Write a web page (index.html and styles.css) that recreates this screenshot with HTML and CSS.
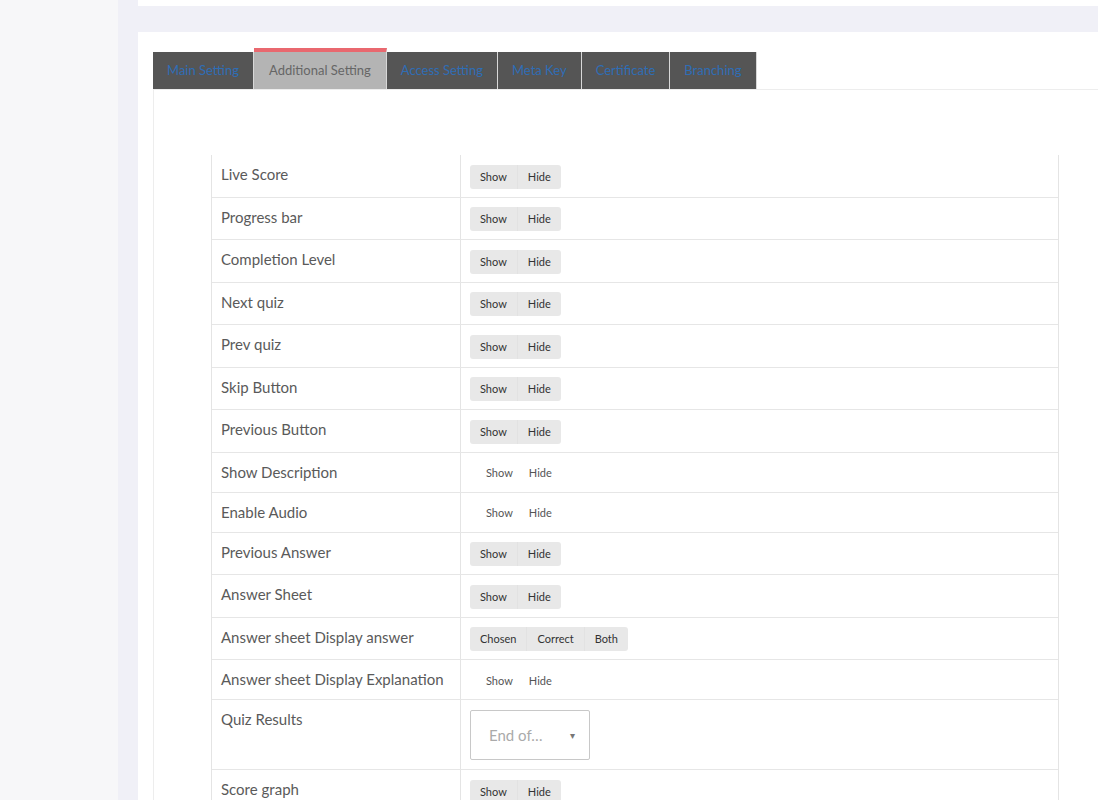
FILE: index.html
```html
<!DOCTYPE html>
<html lang="en">
<head>
    <meta charset="UTF-8">
    <meta name="viewport" content="width=device-width, initial-scale=1.0">
    <title>Quiz Settings</title>
    <link rel="stylesheet" href="styles.css">
</head>
<body>
    <aside class="sidebar"></aside>

    <div class="content">
        <div class="top-card"></div>

        <div class="card">
            <nav class="tabs">
                <a class="tab">Main Setting</a>
                <a class="tab active">Additional Setting</a>
                <a class="tab">Access Setting</a>
                <a class="tab">Meta Key</a>
                <a class="tab">Certificate</a>
                <a class="tab">Branching</a>
            </nav>

            <div class="tab-panel">
                <div class="settings">
                    <div class="row">
                        <div class="label">Live Score</div>
                        <div class="value"><div class="toggle"><span>Show</span><span>Hide</span></div></div>
                    </div>
                    <div class="row">
                        <div class="label">Progress bar</div>
                        <div class="value"><div class="toggle"><span>Show</span><span>Hide</span></div></div>
                    </div>
                    <div class="row">
                        <div class="label">Completion Level</div>
                        <div class="value"><div class="toggle"><span>Show</span><span>Hide</span></div></div>
                    </div>
                    <div class="row">
                        <div class="label">Next quiz</div>
                        <div class="value"><div class="toggle"><span>Show</span><span>Hide</span></div></div>
                    </div>
                    <div class="row">
                        <div class="label">Prev quiz</div>
                        <div class="value"><div class="toggle"><span>Show</span><span>Hide</span></div></div>
                    </div>
                    <div class="row">
                        <div class="label">Skip Button</div>
                        <div class="value"><div class="toggle"><span>Show</span><span>Hide</span></div></div>
                    </div>
                    <div class="row">
                        <div class="label">Previous Button</div>
                        <div class="value"><div class="toggle"><span>Show</span><span>Hide</span></div></div>
                    </div>
                    <div class="row short">
                        <div class="label">Show Description</div>
                        <div class="value"><div class="toggle plain"><span>Show</span><span>Hide</span></div></div>
                    </div>
                    <div class="row short">
                        <div class="label">Enable Audio</div>
                        <div class="value"><div class="toggle plain"><span>Show</span><span>Hide</span></div></div>
                    </div>
                    <div class="row">
                        <div class="label">Previous Answer</div>
                        <div class="value"><div class="toggle"><span>Show</span><span>Hide</span></div></div>
                    </div>
                    <div class="row">
                        <div class="label">Answer Sheet</div>
                        <div class="value"><div class="toggle"><span>Show</span><span>Hide</span></div></div>
                    </div>
                    <div class="row">
                        <div class="label">Answer sheet Display answer</div>
                        <div class="value"><div class="toggle"><span>Chosen</span><span>Correct</span><span>Both</span></div></div>
                    </div>
                    <div class="row short">
                        <div class="label">Answer sheet Display Explanation</div>
                        <div class="value"><div class="toggle plain"><span>Show</span><span>Hide</span></div></div>
                    </div>
                    <div class="row tall">
                        <div class="label">Quiz Results</div>
                        <div class="value">
                            <div class="select"><span>End of…</span><span class="caret">▾</span></div>
                        </div>
                    </div>
                    <div class="row">
                        <div class="label">Score graph</div>
                        <div class="value"><div class="toggle"><span>Show</span><span>Hide</span></div></div>
                    </div>
                </div>
            </div>
        </div>
    </div>
</body>
</html>
```

FILE: styles.css
```css
body {
    margin: 0;
    font-family: Lato, "Open Sans", sans-serif;
    background-color: #f0f0f7;
    display: flex;
    min-height: 100vh;
    overflow: hidden;
}
.sidebar {
    width: 118px;
    flex-shrink: 0;
    background-color: #f7f7f9;
}
.content {
    flex-grow: 1;
    padding-left: 20px;
}
.top-card {
    height: 6px;
    background-color: white;
}
.card {
    margin-top: 26px;
    background-color: white;
    padding: 16px 0 0 15px;
    min-height: 800px;
}
.tabs {
    display: flex;
    align-items: flex-end;
}
.tab {
    height: 37px;
    line-height: 37px;
    padding: 0 14px;
    background-color: #555;
    border-right: 1px solid #d8d8d8;
    color: #2f6db5;
    font-size: 13px;
    cursor: pointer;
}
.tab.active {
    padding: 0 15px;
    background-color: #b4b4b4;
    color: #666;
    border-top: 4px solid #e9686f;
}
.tab-panel {
    border-top: 1px solid #ededed;
    border-left: 1px solid #ededed;
    padding: 65px 0 0 57px;
}
.settings {
    width: 846px;
    border-left: 1px solid #e4e4e4;
    border-right: 1px solid #e4e4e4;
}
.row {
    display: grid;
    grid-template-columns: 248px 1fr;
    height: 41.5px;
    border-bottom: 1px solid #e6e6e6;
}
.row.short {
    height: 39px;
}
.row.tall {
    height: 69px;
}
.label {
    padding: 9px 9px 0;
    font-size: 15px;
    line-height: 20px;
    color: #5a5a5a;
    white-space: nowrap;
}
.value {
    border-left: 1px solid #e4e4e4;
    padding: 2px 9px 0;
    display: flex;
    align-items: center;
}
.tall .value {
    align-items: flex-start;
    padding-top: 10px;
}
.toggle {
    display: flex;
    height: 24px;
    background-color: #e8e8e8;
    border-radius: 3px;
}
.toggle span {
    padding: 0 10px;
    line-height: 24px;
    font-size: 11px;
    color: #333;
}
.toggle span + span {
    border-left: 1px solid #e2e2e2;
}
.toggle.plain {
    background: none;
    padding-left: 8px;
}
.toggle.plain span {
    padding: 0 8px;
    color: #555;
    border: none;
}
.select {
    width: 120px;
    height: 50px;
    border: 1px solid #c8c8c8;
    border-radius: 2px;
    display: flex;
    align-items: center;
    justify-content: space-between;
    padding: 0 14px 0 18px;
    box-sizing: border-box;
    font-size: 15px;
    color: #aaa;
}
.caret {
    font-size: 10px;
    color: #777;
}
```
